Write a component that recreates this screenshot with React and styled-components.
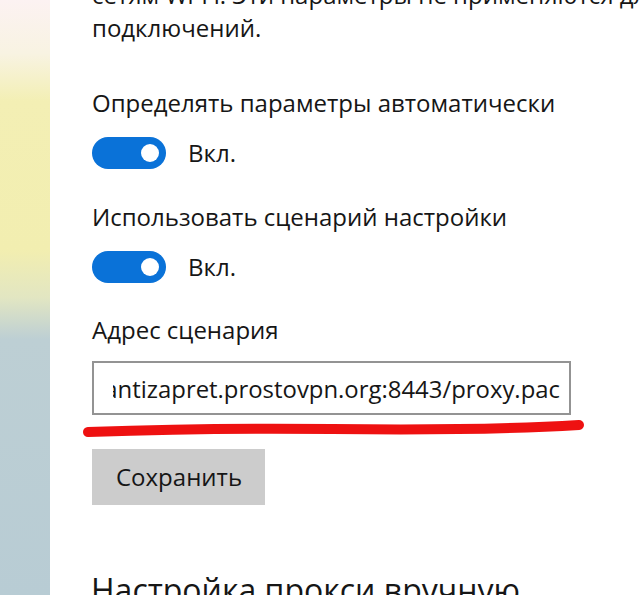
import React from "react";
import styled, { createGlobalStyle } from "styled-components";

const GlobalStyle = createGlobalStyle`
  html, body {
    margin: 0;
    padding: 0;
    background: #fff;
  }
  body {
    width: 640px;
    height: 595px;
    overflow: hidden;
    font-family: "Open Sans", "Noto Sans", sans-serif;
    color: #161616;
  }
`;

function Toggle({ label }) {
  return (
    <ToggleRow>
      <Track>
        <Knob />
      </Track>
      <ToggleLabel>{label}</ToggleLabel>
    </ToggleRow>
  );
}

export default function App() {
  return (
    <>
      <GlobalStyle />
      <Page>
        <Strip />
        <Content>
          <Intro>
            сетям Wi-Fi. Эти параметры не применяются для
            <br />
            подключений.
          </Intro>

          <Label $gap={42}>Определять параметры автоматически</Label>
          <Toggle label="Вкл." />

          <Label $gap={31}>Использовать сценарий настройки</Label>
          <Toggle label="Вкл." />

          <Label $gap={30}>Адрес сценария</Label>
          <InputBox>
            <InputText>
              <span>https://antizapret.prostovpn.org:8443/proxy.pac</span>
            </InputText>
          </InputBox>

          <Scribble viewBox="0 0 503 34" width="503" height="34">
            <path
              d="M6 17 C 90 14, 170 13, 250 14 S 430 14, 497 10"
              fill="none"
              stroke="#ee1111"
              strokeWidth="10"
              strokeLinecap="round"
            />
          </Scribble>

          <SaveButton>Сохранить</SaveButton>

          <Heading>Настройка прокси вручную</Heading>
        </Content>
      </Page>
    </>
  );
}

const Page = styled.div`
  display: flex;
  width: 640px;
  height: 595px;
  overflow: hidden;
`;

const Strip = styled.div`
  flex: 0 0 50px;
  background: linear-gradient(
    to bottom,
    #fcf2f2 0%,
    #f8f3e2 9%,
    #f3efb4 17%,
    #f2eeb0 42%,
    #e2e6c2 50%,
    #bdcfd4 57%,
    #b8ccd4 100%
  );
`;

const Content = styled.div`
  flex: 1;
  padding-left: 42px;
  display: flex;
  flex-direction: column;
  align-items: flex-start;
  min-width: 0;

  & > * {
    flex-shrink: 0;
  }
`;

const Intro = styled.p`
  margin: -22px 0 0;
  font-size: 24px;
  line-height: 33px;
  white-space: nowrap;
`;

const Label = styled.div`
  margin-top: ${({ $gap }) => $gap}px;
  font-size: 24px;
  line-height: 33px;
  white-space: nowrap;
`;

const ToggleRow = styled.div`
  margin-top: 18px;
  display: flex;
  align-items: center;
  gap: 22px;
  height: 32px;
`;

const Track = styled.div`
  width: 74px;
  height: 32px;
  border-radius: 16px;
  background: #0a72d8;
  display: flex;
  align-items: center;
  justify-content: flex-end;
  padding-right: 7px;
  box-sizing: border-box;
`;

const Knob = styled.div`
  width: 18px;
  height: 18px;
  border-radius: 50%;
  background: #fff;
`;

const ToggleLabel = styled.span`
  font-size: 24px;
  line-height: 32px;
`;

const InputBox = styled.div`
  margin-top: 15px;
  width: 479px;
  height: 54px;
  box-sizing: border-box;
  border: 2px solid #939393;
  padding: 0 9px 0 19px;
  display: flex;
  align-items: center;
`;

const InputText = styled.div`
  flex: 1;
  overflow: hidden;
  display: flex;
  justify-content: flex-end;
  font-size: 23.9px;
  white-space: nowrap;

  span {
    flex-shrink: 0;
  }
`;

const Scribble = styled.svg`
  display: block;
  margin-left: -10px;
`;

const SaveButton = styled.button`
  width: 173px;
  height: 56px;
  border: none;
  margin: 0;
  background: #cccccc;
  font-family: inherit;
  font-size: 24px;
  color: #161616;
  text-align: left;
  padding: 0 0 2px 24px;
  cursor: pointer;
`;

const Heading = styled.h2`
  margin: 63px 0 0 -1px;
  font-size: 32px;
  font-weight: 400;
  line-height: 44px;
  white-space: nowrap;
`;
